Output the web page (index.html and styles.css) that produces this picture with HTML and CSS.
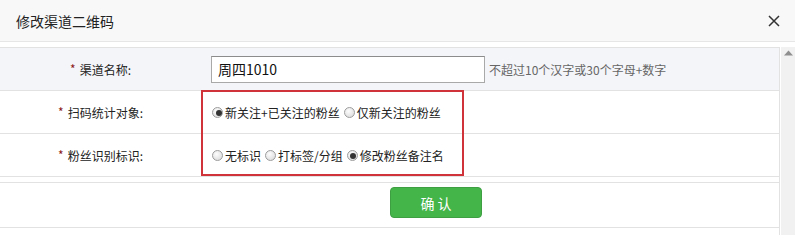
FILE: index.html
```html
<!DOCTYPE html>
<html lang="zh-CN">
<head>
    <meta charset="UTF-8">
    <meta name="viewport" content="width=device-width, initial-scale=1.0">
    <title>修改渠道二维码</title>
    <link rel="stylesheet" href="styles.css">
</head>
<body>
    <div class="dialog">
        <div class="dialog-head">
            <h3>修改渠道二维码</h3>
            <span class="close">
                <svg width="12" height="12" viewBox="0 0 12 12"><path d="M1 1L11 11M11 1L1 11" stroke="#333" stroke-width="1.5" fill="none"/></svg>
            </span>
        </div>
        <div class="dialog-body">
            <div class="scroll-area">
                <div class="form">
                    <div class="form-row first">
                        <div class="form-label"><span class="req">*</span> 渠道名称:</div>
                        <div class="form-value">
                            <input class="text-input" type="text" value="周四1010">
                            <span class="hint">不超过10个汉字或30个字母+数字</span>
                        </div>
                    </div>
                    <div class="form-row">
                        <div class="form-label"><span class="req">*</span> 扫码统计对象:</div>
                        <div class="form-value">
                            <label class="radio"><input type="radio" name="scan" checked>新关注+已关注的粉丝</label>
                            <label class="radio"><input type="radio" name="scan">仅新关注的粉丝</label>
                        </div>
                    </div>
                    <div class="form-row">
                        <div class="form-label"><span class="req">*</span> 粉丝识别标识:</div>
                        <div class="form-value">
                            <label class="radio"><input type="radio" name="mark">无标识</label>
                            <label class="radio"><input type="radio" name="mark">打标签/分组</label>
                            <label class="radio"><input type="radio" name="mark" checked>修改粉丝备注名</label>
                        </div>
                    </div>
                    <div class="highlight"></div>
                </div>
                <div class="form-actions">
                    <button class="btn-ok">确 认</button>
                </div>
            </div>
            <div class="scrollbar">
                <svg width="9" height="6" viewBox="0 0 9 6"><path d="M0 5.5L4.5 0.5L9 5.5Z" fill="#8f8f8f"/></svg>
            </div>
        </div>
    </div>
</body>
</html>
```

FILE: styles.css
```css
body {
    margin: 0;
    padding: 0;
    font-family: "Noto Sans CJK SC", "Liberation Sans", sans-serif;
    font-size: 12px;
    color: #222;
    background-color: #fff;
}

.dialog {
    width: 795px;
    height: 235px;
    overflow: hidden;
}

.dialog-head {
    height: 41px;
    display: flex;
    justify-content: space-between;
    align-items: center;
    padding: 0 15px 0 16px;
    background-color: #f8f8f8;
    border-bottom: 1px solid #e6e6e6;
}

.dialog-head h3 {
    margin: 0;
    font-size: 14px;
    font-weight: normal;
    color: #222;
}

.close {
    display: flex;
    margin-top: 1px;
}

.dialog-body {
    display: flex;
    padding-top: 5px;
}

.scroll-area {
    width: 779px;
    border-right: 1px solid #e2e2e2;
}

.scrollbar {
    width: 14px;
    margin-left: 1px;
    height: 200px;
    background-color: #f1f1f1;
    display: flex;
    justify-content: center;
    padding-top: 3px;
    box-sizing: border-box;
}

.form {
    position: relative;
    border-top: 1px solid #e2e2e2;
}

.form-row {
    display: flex;
    height: 42px;
    border-bottom: 1px solid #e2e2e2;
}

.form-row.first {
    background-color: #f4f5f9;
}

.form-label {
    width: 201px;
    display: flex;
    justify-content: center;
    align-items: center;
    color: #222;
}

.req {
    color: #8b1a1a;
    margin-right: 4px;
    position: relative;
    top: -1px;
}

.form-value {
    flex: 1;
    display: flex;
    align-items: center;
    padding-left: 11px;
}

.text-input {
    width: 274px;
    height: 27px;
    box-sizing: border-box;
    margin-left: -1px;
    padding: 0 6px;
    border: 1px solid #a9a9a9;
    border-top-color: #8c8c8c;
    font-family: "Noto Sans CJK SC", "Liberation Sans", sans-serif;
    font-size: 14px;
    color: #111;
    outline: none;
}

.hint {
    margin-left: 4px;
    color: #666;
}

.radio {
    display: flex;
    align-items: center;
    margin-right: 4px;
    color: #222;
}

.radio input {
    appearance: none;
    -webkit-appearance: none;
    width: 11px;
    height: 11px;
    margin: 0 2px 0 0;
    border: 1px solid #9c9c9c;
    border-radius: 50%;
    background: radial-gradient(circle at 40% 35%, #fdfdfd, #d6d6d6);
    position: relative;
}

.radio input:checked::after {
    content: "";
    position: absolute;
    left: 2.5px;
    top: 2.5px;
    width: 6px;
    height: 6px;
    border-radius: 50%;
    background-color: #333;
}

.highlight {
    position: absolute;
    left: 201px;
    top: 42px;
    width: 263px;
    height: 86px;
    border: 2px solid #d0333a;
    box-sizing: border-box;
}

.form-actions {
    margin-top: 5px;
    height: 40px;
    border-top: 1px solid #e2e2e2;
    border-bottom: 1px solid #e2e2e2;
    padding: 4px 0 0 390px;
    box-sizing: content-box;
}

.btn-ok {
    width: 92px;
    height: 31px;
    border: 1px solid #3e9e42;
    border-radius: 4px;
    background-color: #44b549;
    color: #fff;
    font-family: "Noto Sans CJK SC", "Liberation Sans", sans-serif;
    font-size: 14px;
    cursor: pointer;
}
```
